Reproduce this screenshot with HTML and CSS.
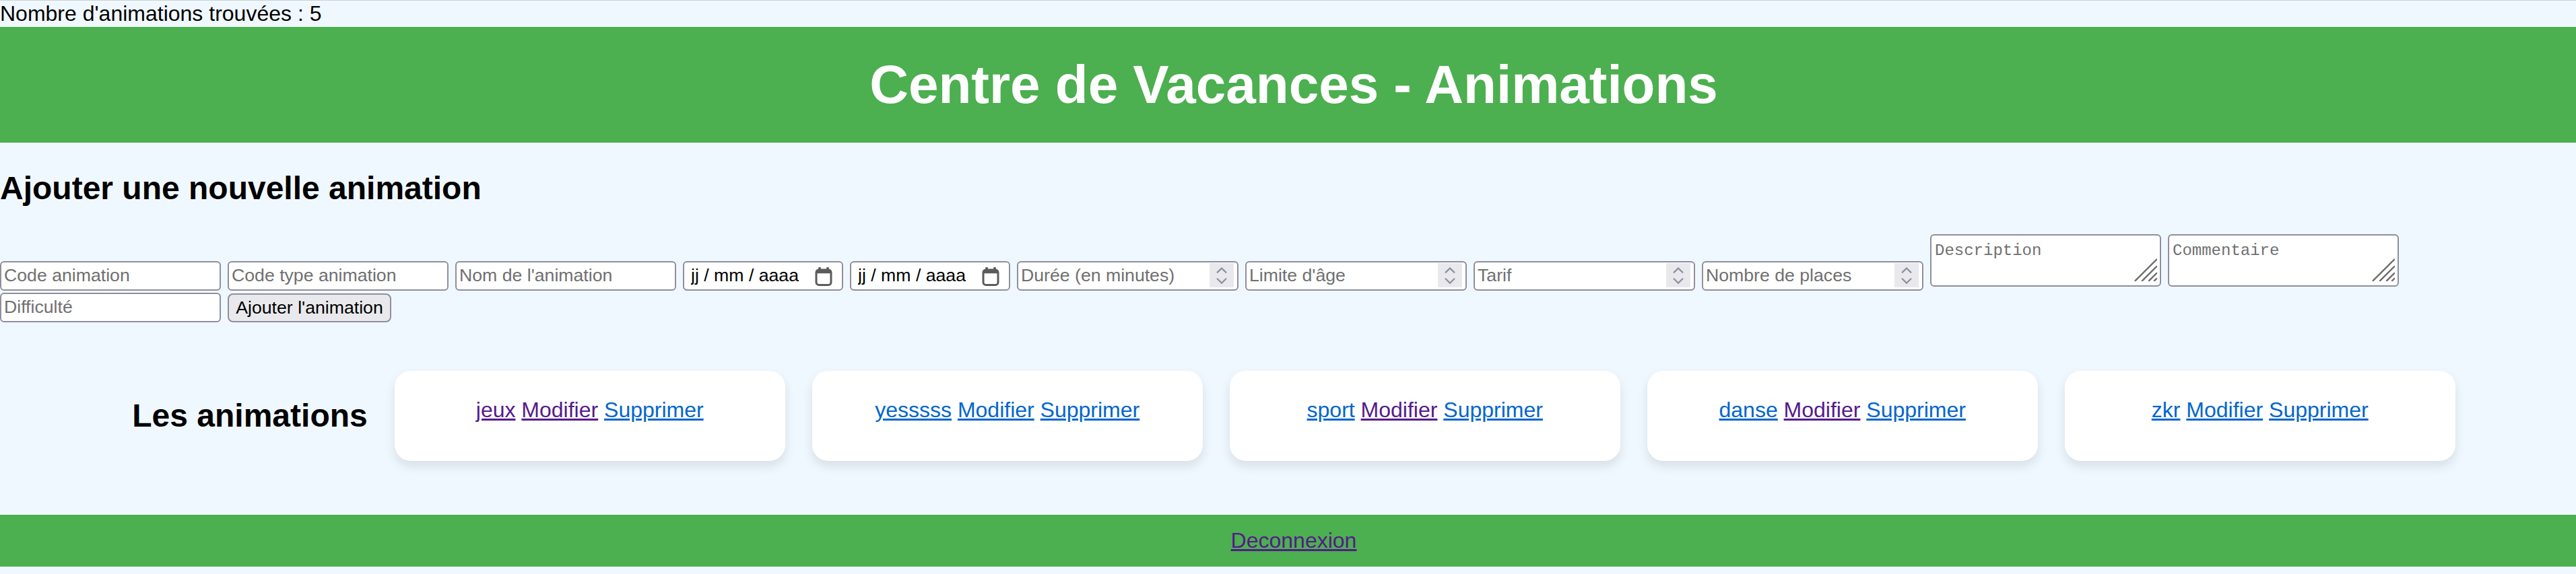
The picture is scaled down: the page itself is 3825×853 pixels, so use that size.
FILE: index.html
```html
<!DOCTYPE html>
<html lang="fr">
<head>
<meta charset="utf-8">
<title>Centre de Vacances - Animations</title>
<link rel="stylesheet" href="styles.css">
</head>
<body>
<div class="count">Nombre d'animations trouvées : 5</div>
<header class="site-header">
  <h1 class="site-title">Centre de Vacances - Animations</h1>
</header>
<main>
  <h2 class="section-title">Ajouter une nouvelle animation</h2>
  <form class="add-form">
    <input class="input w-text" type="text" placeholder="Code animation">
    <input class="input w-text" type="text" placeholder="Code type animation">
    <input class="input w-text" type="text" placeholder="Nom de l'animation">
    <span class="field w-date">
      <input class="input date-input" type="text" placeholder="jj / mm / aaaa">
      <svg class="cal" viewBox="0 0 13 14" aria-hidden="true"><rect x="2.6" y="0" width="1.8" height="3" rx="0.6" fill="#5b5b5b"/><rect x="8.6" y="0" width="1.8" height="3" rx="0.6" fill="#5b5b5b"/><rect x="1" y="2" width="11" height="11.2" rx="2" fill="#fff" stroke="#5b5b5b" stroke-width="1.5"/><path d="M1 4.2 V4 a2 2 0 0 1 2-2 H10 a2 2 0 0 1 2 2 V4.6 H1z" fill="#5b5b5b"/></svg>
    </span>
    <span class="field w-date">
      <input class="input date-input" type="text" placeholder="jj / mm / aaaa">
      <svg class="cal" viewBox="0 0 13 14" aria-hidden="true"><rect x="2.6" y="0" width="1.8" height="3" rx="0.6" fill="#5b5b5b"/><rect x="8.6" y="0" width="1.8" height="3" rx="0.6" fill="#5b5b5b"/><rect x="1" y="2" width="11" height="11.2" rx="2" fill="#fff" stroke="#5b5b5b" stroke-width="1.5"/><path d="M1 4.2 V4 a2 2 0 0 1 2-2 H10 a2 2 0 0 1 2 2 V4.6 H1z" fill="#5b5b5b"/></svg>
    </span>
    <span class="field w-num">
      <input class="input num-input" type="number" placeholder="Durée (en minutes)">
      <span class="spin" aria-hidden="true"><svg viewBox="0 0 18 18"><polyline points="5.5,7.2 9,3.8 12.5,7.2"/><polyline points="5.5,11.4 9,14.8 12.5,11.4"/></svg></span>
    </span>
    <span class="field w-num">
      <input class="input num-input" type="number" placeholder="Limite d'âge">
      <span class="spin" aria-hidden="true"><svg viewBox="0 0 18 18"><polyline points="5.5,7.2 9,3.8 12.5,7.2"/><polyline points="5.5,11.4 9,14.8 12.5,11.4"/></svg></span>
    </span>
    <span class="field w-num">
      <input class="input num-input" type="number" placeholder="Tarif">
      <span class="spin" aria-hidden="true"><svg viewBox="0 0 18 18"><polyline points="5.5,7.2 9,3.8 12.5,7.2"/><polyline points="5.5,11.4 9,14.8 12.5,11.4"/></svg></span>
    </span>
    <span class="field w-num">
      <input class="input num-input" type="number" placeholder="Nombre de places">
      <span class="spin" aria-hidden="true"><svg viewBox="0 0 18 18"><polyline points="5.5,7.2 9,3.8 12.5,7.2"/><polyline points="5.5,11.4 9,14.8 12.5,11.4"/></svg></span>
    </span>
    <span class="field w-area">
      <textarea class="area" placeholder="Description"></textarea>
      <svg class="grip" viewBox="0 0 17 17" aria-hidden="true"><line x1="0.8" y1="16.6" x2="16.6" y2="0.8"/><line x1="6" y1="16.6" x2="16.6" y2="6"/><line x1="11" y1="16.6" x2="16.6" y2="11"/><line x1="15" y1="16.6" x2="16.6" y2="15"/></svg>
    </span>
    <span class="field w-area">
      <textarea class="area" placeholder="Commentaire"></textarea>
      <svg class="grip" viewBox="0 0 17 17" aria-hidden="true"><line x1="0.8" y1="16.6" x2="16.6" y2="0.8"/><line x1="6" y1="16.6" x2="16.6" y2="6"/><line x1="11" y1="16.6" x2="16.6" y2="11"/><line x1="15" y1="16.6" x2="16.6" y2="15"/></svg>
    </span>
    <input class="input w-text" type="text" placeholder="Difficulté">
    <button class="btn" type="button">Ajouter l'animation</button>
  </form>

  <section class="list">
    <h2 class="list-title">Les animations</h2>
    <div class="card"><a class="visited" href="#">jeux</a> <a class="visited" href="#">Modifier</a> <a href="#">Supprimer</a></div>
    <div class="card"><a href="#">yesssss</a> <a href="#">Modifier</a> <a href="#">Supprimer</a></div>
    <div class="card"><a href="#">sport</a> <a class="visited" href="#">Modifier</a> <a href="#">Supprimer</a></div>
    <div class="card"><a href="#">danse</a> <a class="visited" href="#">Modifier</a> <a href="#">Supprimer</a></div>
    <div class="card"><a href="#">zkr</a> <a href="#">Modifier</a> <a href="#">Supprimer</a></div>
  </section>
</main>
<footer class="site-footer">
  <a class="visited" href="#">Deconnexion</a>
</footer>
</body>
</html>
```

FILE: styles.css
```css
html {
  zoom: 2;
  overflow-x: hidden;
  background: #f0f8ff;
  border-top: 0.5px solid #d0d0d0;
}

body {
  margin: 0;
  width: 1921px;
  font-family: "Liberation Sans", Arial, sans-serif;
  font-size: 16px;
  color: #000;
}

a {
  color: #0066cc;
}

a.visited {
  color: #551a8b;
}

.count {
  line-height: 19.5px;
}

.site-header {
  background: #4caf50;
  padding: 20px;
  text-align: center;
}

.site-title {
  margin: 0;
  font-size: 40px;
  line-height: 46px;
  font-weight: bold;
  color: #fff;
}

.section-title {
  margin: 19.92px 0;
  font-size: 24px;
  font-weight: bold;
}

.add-form {
  display: flex;
  flex-wrap: wrap;
  align-items: flex-end;
  column-gap: 5px;
  row-gap: 1.5px;
}

.input {
  box-sizing: border-box;
  height: 22px;
  margin: 0;
  padding: 1px 2px;
  border: 1px solid #8f8f9d;
  border-radius: 3px;
  background: #fff;
  font-family: "Liberation Sans", Arial, sans-serif;
  font-size: 13.333px;
  color: #000;
}

.input::placeholder {
  color: #707070;
  opacity: 1;
}

.w-text {
  width: 164px;
}

.field {
  position: relative;
  display: block;
}

.field .input {
  width: 100%;
  display: block;
}

.w-date {
  width: 119px;
}

.w-num {
  width: 164.5px;
}

.date-input {
  padding-left: 5px;
}

.date-input::placeholder {
  color: #000;
}

.cal {
  position: absolute;
  right: 8px;
  top: 4.5px;
  width: 13px;
  height: 14px;
}

.num-input {
  -moz-appearance: textfield;
  appearance: textfield;
}

.num-input::-webkit-inner-spin-button,
.num-input::-webkit-outer-spin-button {
  -webkit-appearance: none;
  margin: 0;
}

.spin {
  position: absolute;
  right: 3.5px;
  top: 1.8px;
  width: 18px;
  height: 18px;
  background: #e9e9ed;
}

.spin svg {
  display: block;
  width: 18px;
  height: 18px;
  fill: none;
  stroke: #8f8f9d;
  stroke-width: 1.1;
}

.w-area {
  width: 171.5px;
  margin: 0.5px 0 3px;
}

.area {
  display: block;
  box-sizing: border-box;
  width: 100%;
  height: 39px;
  margin: 0;
  padding: 4.8px 2.5px 2px;
  border: 1px solid #8f8f9d;
  border-radius: 3px;
  background: #fff;
  resize: none;
  font-family: "Liberation Mono", "DejaVu Sans Mono", monospace;
  font-size: 12px;
  color: #000;
}

.area::placeholder {
  color: #707070;
  opacity: 1;
}

.grip {
  position: absolute;
  right: 3px;
  bottom: 4px;
  width: 17px;
  height: 17px;
  stroke: #6e6e6e;
  stroke-width: 1.2;
  stroke-linecap: round;
}

.btn {
  box-sizing: border-box;
  width: 121.5px;
  height: 21.5px;
  margin: 0;
  padding: 0 4px;
  border: 1px solid #8f8f9d;
  border-radius: 4px;
  background: #e9e9ed;
  font-family: "Liberation Sans", Arial, sans-serif;
  font-size: 13.333px;
  color: #000;
}

.list {
  display: flex;
  justify-content: center;
  align-items: center;
  gap: 20px;
  padding: 36px 0 40px;
}

.list-title {
  margin: 0;
  font-size: 24px;
  font-weight: bold;
  white-space: nowrap;
}

.card {
  box-sizing: border-box;
  width: 290px;
  height: 67px;
  padding: 20px 20px 0;
  background: #fff;
  border-radius: 12px;
  box-shadow: 0 4px 8px rgba(0, 0, 0, 0.1);
  text-align: center;
}

.site-footer {
  background: #4caf50;
  padding: 10px;
  text-align: center;
}
```
